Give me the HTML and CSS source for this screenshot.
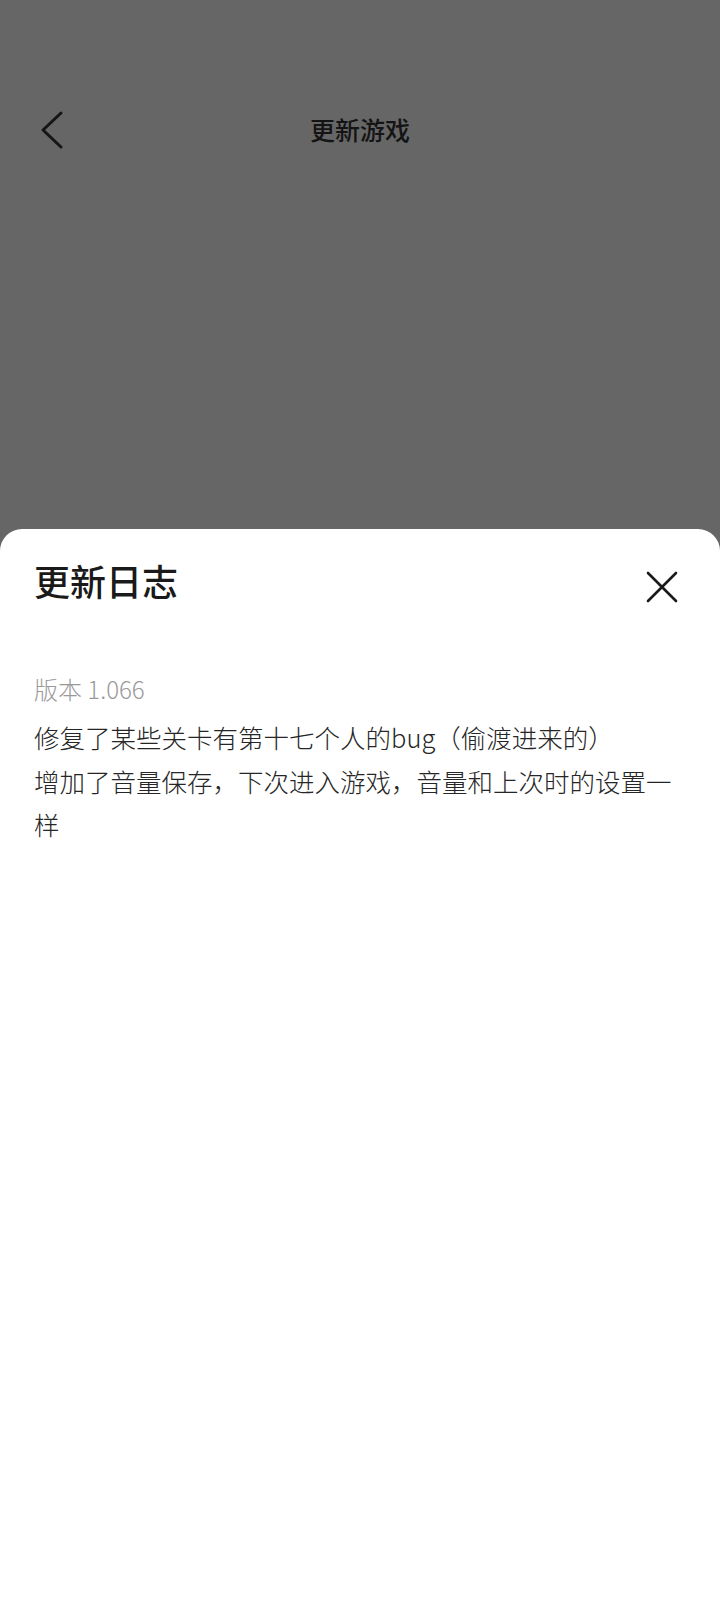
FILE: index.html
```html
<!DOCTYPE html>
<html lang="zh-CN">
<head>
<meta charset="utf-8">
<link rel="stylesheet" href="styles.css">
</head>
<body>
<div class="page">
  <header class="topbar">
    <div class="back">
      <svg width="24" height="40" viewBox="0 0 24 40"><path d="M21 3 L3 20 L21 37" fill="none" stroke="#151515" stroke-width="3" stroke-linecap="round" stroke-linejoin="round"/></svg>
    </div>
    <div class="title">更新游戏</div>
  </header>
  <section class="sheet">
    <div class="sheet-head">
      <h1 class="sheet-title">更新日志</h1>
      <div class="close">
        <svg width="32" height="32" viewBox="0 0 32 32"><path d="M2 2 L30 30 M30 2 L2 30" fill="none" stroke="#1a1a1a" stroke-width="2.6" stroke-linecap="round"/></svg>
      </div>
    </div>
    <div class="version">版本 1.066</div>
    <div class="log">
      <p>修复了某些关卡有第十七个人的bug（偷渡进来的）</p>
      <p>增加了音量保存，下次进入游戏，音量和上次时的设置一样</p>
    </div>
  </section>
</div>
</body>
</html>
```

FILE: styles.css
```css
html, body {
  margin: 0;
  padding: 0;
}
body {
  width: 720px;
  height: 1610px;
  background: #666666;
  font-family: "Noto Sans CJK SC", "Noto Sans", sans-serif;
  overflow: hidden;
}
.page {
  display: flex;
  flex-direction: column;
  height: 1610px;
}
.topbar {
  flex: 1;
  position: relative;
  display: flex;
  align-items: flex-start;
  justify-content: center;
  padding-top: 109px;
}
.back {
  position: absolute;
  left: 40px;
  top: 110px;
  width: 24px;
  height: 40px;
}
.title {
  font-size: 25px;
  line-height: 40px;
  font-weight: 500;
  color: #141414;
}
.sheet {
  height: 1081px;
  background: #ffffff;
  border-radius: 22px 22px 0 0;
  padding: 0 34px;
  box-sizing: border-box;
}
.sheet-head {
  display: flex;
  justify-content: space-between;
  align-items: flex-start;
  padding-top: 30px;
}
.sheet-title {
  margin: 0;
  font-size: 36px;
  line-height: 42px;
  font-weight: 500;
  color: #1a1a1a;
}
.close {
  margin-right: 8px;
  width: 32px;
  height: 32px;
  margin-top: 12px;
}
.close svg { display: block; }
.version {
  margin-top: 69px;
  font-size: 24px;
  line-height: 34px;
  font-weight: 300;
  color: #9a9a9a;
}
.log {
  margin-top: 9px;
  font-size: 25.5px;
  line-height: 43.5px;
  font-weight: 300;
  color: #262626;
}
.log p {
  margin: 0;
}
```
